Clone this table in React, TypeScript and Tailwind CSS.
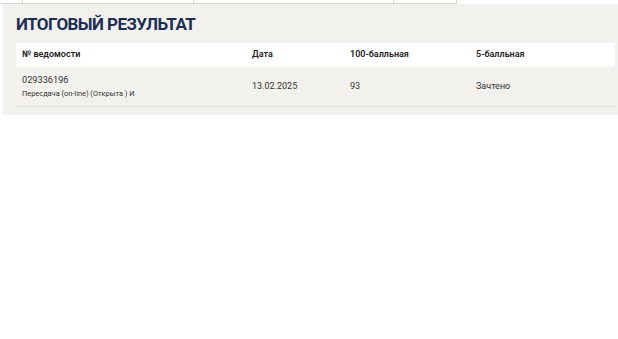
export default function App() {
  const rows = [
    {
      number: "029336196",
      note: "Пересдача (on-line) (Открыта ) И",
      date: "13.02.2025",
      score100: "93",
      score5: "Зачтено",
    },
  ]

  return (
    <div className="w-full min-h-[339px] bg-white" style={{ fontFamily: 'Roboto, "Open Sans", sans-serif' }}>
      {/* tail of the tab strip above */}
      <div className="flex h-[4px]">
        <div className="w-[23px] border-r border-b border-[#d6d6d2]" />
        <div className="w-[171px] border-r border-b border-[#d6d6d2]" />
        <div className="w-[200px] border-r border-b border-[#d6d6d2]" />
        <div className="w-[63px] border-r border-b border-[#d6d6d2]" />
      </div>

      <section className="ml-[3px] bg-[#f2f1ee] pl-[13px] pr-[3px] pt-[10px] pb-[8px]">
        <h2 className="text-[17px] leading-[20px] font-bold text-[#1b2f55] tracking-[-0.55px]">ИТОГОВЫЙ РЕЗУЛЬТАТ</h2>

        <div className="mt-[9px]">
          <div className="grid grid-cols-[230px_98px_126px_1fr] items-center h-[24px] px-[6px] bg-white text-[9px] font-semibold text-[#222]">
            <div>№ ведомости</div>
            <div>Дата</div>
            <div>100-балльная</div>
            <div>5-балльная</div>
          </div>
          {rows.map((r) => (
            <div
              key={r.number}
              className="grid grid-cols-[230px_98px_126px_1fr] items-center h-[40px] px-[6px] border-b border-[#e2e1dd] text-[9px] text-[#333]"
            >
              <div>
                <div className="text-[9.2px] leading-[12px]">{r.number}</div>
                <div className="text-[7.4px] leading-[11px] mt-[2px]">{r.note}</div>
              </div>
              <div>{r.date}</div>
              <div>{r.score100}</div>
              <div>{r.score5}</div>
            </div>
          ))}
        </div>
      </section>
    </div>
  )
}
